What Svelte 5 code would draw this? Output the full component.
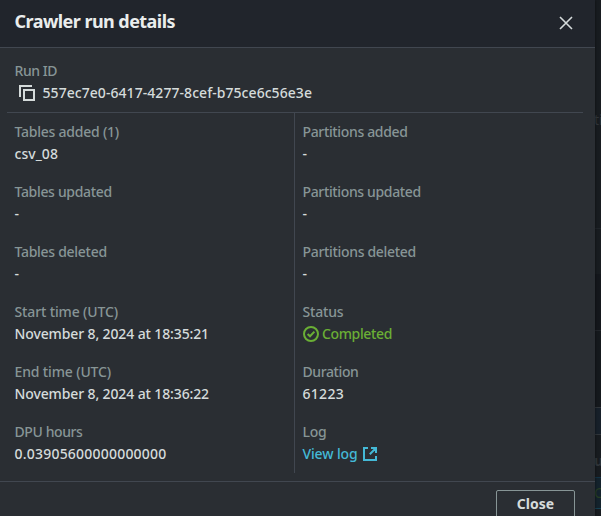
<script>
  const left = [
    { label: 'Tables added (1)', lw: 104.5, value: 'csv_08', vw: 43.5 },
    { label: 'Tables updated', lw: 97.3, value: '-' },
    { label: 'Tables deleted', lw: 92.3, value: '-' },
    { label: 'Start time (UTC)', lw: 103.5, value: 'November 8, 2024 at 18:35:21', vw: 194.5 },
    { label: 'End time (UTC)', lw: 96.5, value: 'November 8, 2024 at 18:36:22', vw: 194.5 },
    { label: 'DPU hours', lw: 68, value: '0.03905600000000000', vw: 152 }
  ];
  const right = [
    { label: 'Partitions added', lw: 105, value: '-' },
    { label: 'Partitions updated', lw: 118.3, value: '-' },
    { label: 'Partitions deleted', lw: 113.3, value: '-' },
    { label: 'Status', lw: 41, value: 'Completed', vw: 70 },
    { label: 'Duration', lw: 56, value: '61223', vw: 41.5 },
    { label: 'Log', lw: 24, value: 'View log', vw: 55, kind: 'link' }
  ];
  right[3].kind = 'success';

  // Tracks a text so that it takes up the given width.
  function fit(node, width) {
    if (!width) return;
    const natural = node.getBoundingClientRect().width;
    node.style.letterSpacing = `${(width - natural) / node.textContent.length}px`;
  }
</script>

{#snippet field(item)}
  <div class="field">
    <div class="label"><span use:fit={item.lw}>{item.label}</span></div>
    <div class="value {item.kind ?? ''}">
      {#if item.kind === 'success'}
        <svg width="16" height="16" viewBox="0 0 16 16"><circle cx="8" cy="8" r="7" /><path d="M4.6 8l2.4 2.3L11.4 5.6" /></svg>
      {/if}
      <span use:fit={item.vw}>{item.value}</span>
      {#if item.kind === 'link'}
        <svg width="16" height="16" viewBox="0 0 16 16"><path d="M6 2H2v12h12v-4M9 2h5v5M14 2L7.8 8.2" /></svg>
      {/if}
    </div>
  </div>
{/snippet}

<div class="page">
  <section class="modal">
    <header>
      <h2><span use:fit={160.5}>Crawler run details</span></h2>
      <svg width="16" height="16" viewBox="0 0 16 16"><path d="M2 2l12 12M14 2L2 14" /></svg>
    </header>
    <main>
      <div class="run">
        <div class="label"><span use:fit={42.5}>Run ID</span></div>
        <div class="value id">
          <svg width="16" height="16" viewBox="0 0 16 16"><path d="M1 12V1h12" /><path d="M5 5h10v10H5z" /></svg>
          <span use:fit={269.5}>557ec7e0-6417-4277-8cef-b75ce6c56e3e</span>
        </div>
      </div>
      <div class="columns">
        <div class="col">{#each left as item}{@render field(item)}{/each}</div>
        <div class="col second">{#each right as item}{@render field(item)}{/each}</div>
      </div>
    </main>
    <footer><button>Close</button></footer>
  </section>
  <aside>
    <div class="s1"><span>ti</span></div>
    <div class="s2"></div>
    <div class="s3"></div>
    <div class="s4"></div>
    <div class="s5"></div>
    <div class="s6"><span>u</span></div>
    <div class="s7"><span>C</span></div>
    <div class="s8"></div>
  </aside>
</div>

<style>
  :global(body) { background: #16191f; overflow: hidden; }
  .page { display: flex; width: 601px; height: 516px; overflow: hidden; font: 14px/22px "Noto Sans", "Open Sans", sans-serif; }
  .modal { width: 595px; flex: none; display: flex; flex-direction: column; background: #2a2e33; box-shadow: 0 0 3px #0008; z-index: 1; }
  header, main, footer { flex: none; }
  header { height: 47px; background: #21252c; border-bottom: 1px solid #414750; display: flex; justify-content: space-between; padding: 0 21px 0 14.5px; }
  h2 { margin: 10px 0 0; font-size: 18px; line-height: 22px; font-weight: 700; color: #eaeded; white-space: nowrap; }
  svg { flex: none; fill: none; stroke: #d5dbdb; stroke-width: 2; }
  header svg { margin-top: 15px; stroke-width: 1.6; }
  main { padding: 12px 12px 8px 7px; }
  .run { height: 52px; border-bottom: 1px solid #414750; padding-left: 7.5px; }
  .label { color: #879596; height: 22px; font-weight: 500; white-space: nowrap; }
  .value { color: #d5dbdb; height: 22px; font-weight: 500; white-space: nowrap; display: flex; align-items: center; }
  .id { padding-left: 4.5px; gap: 7.5px; }
  .columns { display: flex; height: 360px; }
  .col { width: 287px; box-sizing: border-box; padding: 8px 0 8px 7.5px; display: flex; flex-direction: column; gap: 16px; }
  .second { border-left: 1px solid #414750; }
  .success { color: #6aaf35; gap: 3px; }
  .success svg { stroke: #6aaf35; margin-left: 0.5px; }
  .link { color: #44b9d6; gap: 4.5px; }
  .link svg { stroke: #44b9d6; }
  footer { border-top: 1px solid #414750; padding: 8px 20px 0; display: flex; justify-content: flex-end; }
  button { width: 79px; height: 32px; padding: 0 0 4px; border: 1px solid #879596; border-radius: 2px; background: transparent; color: #d5dbdb; font: 700 14px/20px "Noto Sans", sans-serif; }
  aside { width: 6px; flex: none; overflow: hidden; background: #181c20; color: #30363c; display: flex; flex-direction: column; }
  aside div { box-sizing: border-box; flex: none; overflow: hidden; }
  aside span { margin-left: -1px; }
  .s1 { height: 229px; padding-top: 109px; border-bottom: 1px solid #20252a; }
  .s2 { height: 45px; }
  .s3 { height: 57px; background: #14171c; border-bottom: 1px solid #22262b; }
  .s4 { height: 77px; background: #15191d; border-bottom: 1px solid #30353a; }
  .s5 { height: 27px; background: #17202a; border-bottom: 1px solid #30353a; }
  .s6 { height: 43px; padding-top: 15px; border-bottom: 1px solid #143345; font-weight: 700; }
  .s7 { height: 31px; padding-top: 4px; background: #14232d; color: #263e24; border-bottom: 1px solid #164153; }
  .s8 { height: 7px; }
</style>
